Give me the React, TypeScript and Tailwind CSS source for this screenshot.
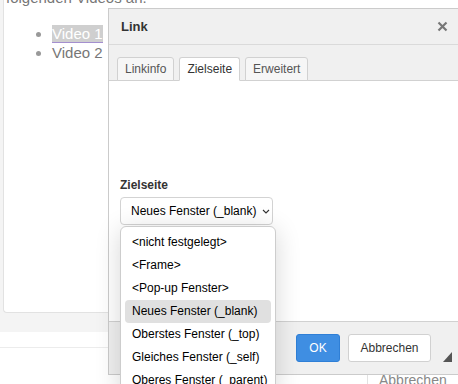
import React from "react";

const targets = [
  "<nicht festgelegt>",
  "<Frame>",
  "<Pop-up Fenster>",
  "Neues Fenster (_blank)",
  "Oberstes Fenster (_top)",
  "Gleiches Fenster (_self)",
  "Oberes Fenster (_parent)",
];

const App = () => {
  const selected = 3;

  return (
    <div className="relative h-[384px] w-[458px] overflow-hidden bg-white font-['Liberation_Sans',Arial,sans-serif]">
      {/* editor page behind the dialog */}
      <div className="bg-[#f4f4f4] pb-[19px] pl-[3px]">
        <div className="h-[313px] overflow-hidden rounded-bl-[4px] border-b border-l border-[#e2e2e2] bg-white text-[15px] leading-[19px] text-[#777]">
          <p className="-mt-[12px] pl-[2px]">folgenden Videos an.</p>
          <ul className="mt-[17px] list-disc pl-[48px] marker:text-[#999]">
            <li>
              <span className="border-b border-[#a48fcf] bg-[#cfcfcf] text-white">
                Video 1
              </span>
            </li>
            <li>Video 2</li>
          </ul>
        </div>
      </div>
      <div className="h-[16px] border-b border-[#ececec]" />
      <div className="ml-[367px] mt-[17px] border-l border-[#e2e2e2] pl-[11px] pt-[7px] text-[14px] leading-[16px] text-[#888]">
        Abbrechen
      </div>

      {/* link dialog */}
      <div className="absolute left-[108px] top-[8px] flex h-[367px] w-[352px] flex-col border border-[#cbcbcb] bg-white">
        <div className="flex h-[36px] items-center justify-between border-b border-[#dadada] bg-[#f0f0f0] pl-[12px] pr-[11px]">
          <span className="text-[13px] font-bold text-[#333]">Link</span>
          <svg width="11" height="11" viewBox="0 0 11 11">
            <path
              d="M1.5 1.5 L9.5 9.5 M9.5 1.5 L1.5 9.5"
              stroke="#777"
              strokeWidth="2.2"
            />
          </svg>
        </div>
        <div className="flex h-[36px] items-end gap-[5px] border-b border-[#d1d1d1] bg-[#f0f0f0] pl-[8px]">
          {["Linkinfo", "Zielseite", "Erweitert"].map((tab) => (
            <div
              key={tab}
              className={`-mb-px flex h-[24px] items-center rounded-t-[3px] border border-[#d1d1d1] px-[7px] text-[12px] ${
                tab === "Zielseite"
                  ? "border-b-white bg-white text-[#333]"
                  : "bg-[#f6f6f6] text-[#555]"
              }`}
            >
              {tab}
            </div>
          ))}
        </div>
        <div className="flex-1 px-[11px] pt-[97px]">
          <div className="mb-[5px] text-[12px] font-bold leading-[14px] text-[#333]">
            Zielseite
          </div>
          <div className="flex h-[28px] w-[153px] items-center gap-[6px] rounded-[4px] border border-[#d3d3d3] pl-[10px] text-[12px] text-black">
            Neues Fenster (_blank)
            <svg width="8" height="5" viewBox="0 0 8 5">
              <path d="M1 1 L4 4 L7 1" fill="none" stroke="#333" strokeWidth="1.1" />
            </svg>
          </div>
        </div>
        <div className="relative flex h-[53px] items-center justify-end gap-[8px] border-t border-[#d1d1d1] bg-[#f0f0f0] pr-[28px]">
          <button className="h-[28px] w-[44px] rounded-[3px] border border-[#2f7fd6] bg-[#3f8ee2] text-[12px] text-white">
            OK
          </button>
          <button className="h-[28px] w-[83px] rounded-[3px] border border-[#d1d1d1] bg-white text-[12px] text-[#333]">
            Abbrechen
          </button>
          <svg
            className="absolute bottom-[12px] right-[7px]"
            width="9"
            height="10"
            viewBox="0 0 9 10"
          >
            <path d="M9 0 L9 10 L0 10 Z" fill="#555" />
          </svg>
        </div>
      </div>

      {/* open select list */}
      <div className="absolute left-[120px] top-[226px] w-[156px] rounded-[6px] border border-[#cdcdcd] bg-white p-[4px] shadow-[0_4px_26px_rgba(0,0,0,0.16)]">
        {targets.map((t, i) => (
          <div
            key={t}
            className={`h-[23px] rounded-[4px] pl-[7px] text-[12px] leading-[23px] text-black ${
              i === selected ? "bg-[#e0e0e0]" : ""
            }`}
          >
            {t}
          </div>
        ))}
      </div>
    </div>
  );
};

export default App;
